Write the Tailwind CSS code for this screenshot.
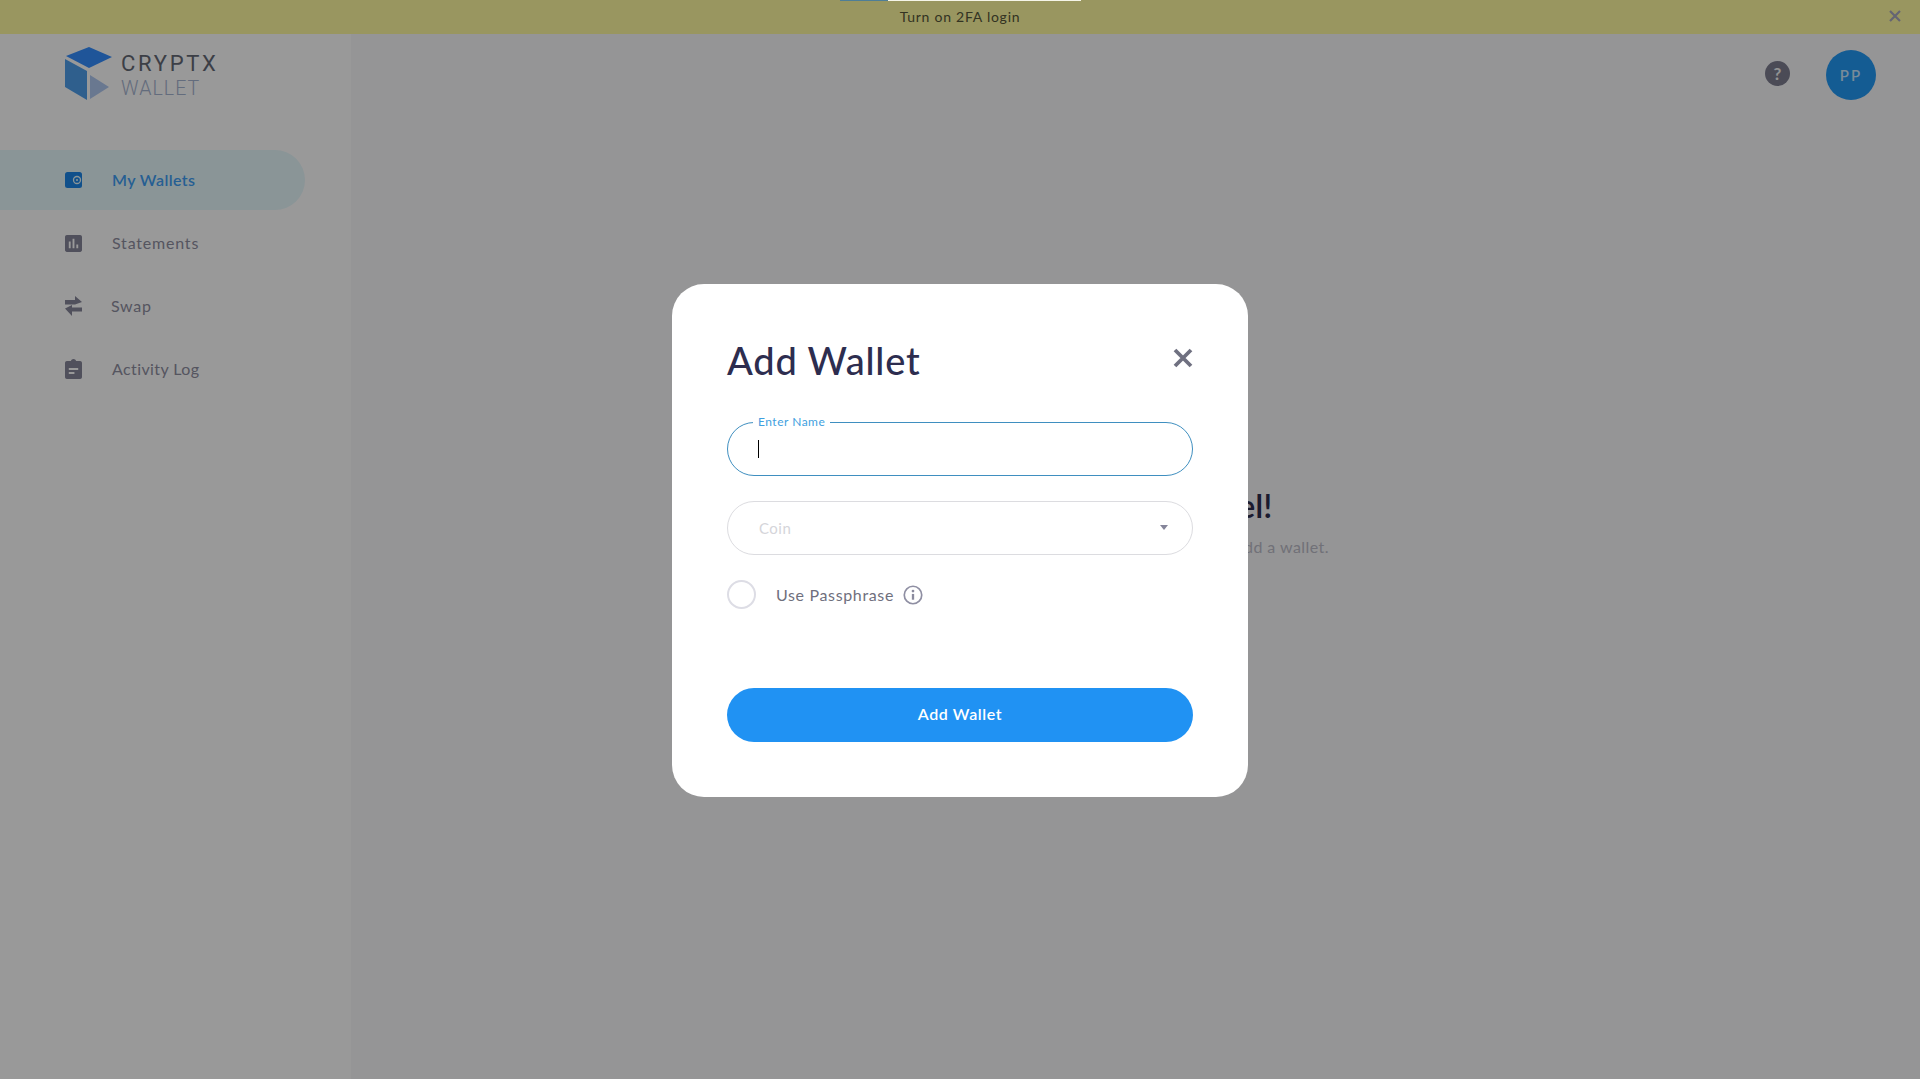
<!DOCTYPE html>
<html lang="en">
<head>
  <meta charset="UTF-8">
  <title>CryptX Wallet</title>
  <script src="https://cdn.jsdelivr.net/npm/@tailwindcss/browser@4"></script>
</head>
<body class="font-['Lato','Noto_Sans',sans-serif]">
  <div class="relative h-[1079px] w-[1920px] overflow-hidden bg-[#f8f8fa]">

    <!-- top banner -->
    <div class="relative flex h-[34px] items-center justify-center bg-[#fffaa0] pb-[1px] text-[14px] tracking-[0.75px] text-[#55553a]">
      <span>Turn on 2FA login</span>
      <svg class="absolute right-[19px] top-[10px] h-3 w-3" viewBox="0 0 12 12" fill="none" stroke="#a8a8c0" stroke-width="2.2"><path d="M1 1l10 10M11 1L1 11"/></svg>
    </div>

    <div class="flex h-[1045px]">
      <!-- sidebar -->
      <aside class="w-[351px] shrink-0 bg-white">
        <div class="flex h-[116px] items-start pl-[65px] pt-[13px]">
          <svg class="h-[53px] w-[47px]" viewBox="0 0 47 53">
            <path d="M1 9L24 0l23 10-23 11z" fill="#348eff"/>
            <path d="M0 12l22 12v29L0 40z" fill="#4f9fec"/>
            <path d="M25 28l19 12-19 12z" fill="#b0c8f0"/>
          </svg>
          <div class="ml-[9px] mt-[6px] font-['Roboto',sans-serif] leading-none">
            <div class="text-[22px] tracking-[2.7px] text-[#646976]">CRYPTX</div>
            <div class="mt-[4px] text-[19.5px] font-light tracking-[1.1px] text-[#a6b4d0]">WALLET</div>
          </div>
        </div>

        <nav class="flex flex-col gap-[3px] text-[16px] tracking-[0.6px] text-[#8e8e9f]">
          <a class="flex h-[60px] w-[305px] items-center rounded-r-full bg-[#e7f8fc] pl-[65px] font-semibold tracking-[0.4px] text-[#3f9ff5]">
            <svg class="h-4 w-[17px] shrink-0" viewBox="0 0 17 16"><rect width="17" height="16" rx="2.500" fill="#1c86e8"/><path d="M17 2.500h-4.500a5.500 5.500 0 0 0 0 11H17z" fill="#1c86e8"/><circle cx="12" cy="8" r="3.500" fill="none" stroke="#e7f8fc" stroke-width="1.300"/><circle cx="12" cy="8" r="1" fill="#e7f8fc"/></svg>
            <span class="ml-[30px]">My Wallets</span>
          </a>
          <a class="flex h-[60px] items-center pl-[65px]">
            <svg class="h-[17px] w-[17px] shrink-0" viewBox="3 3 18 18" fill="#858599"><path d="M19 3H5c-1.100 0-2 .9-2 2v14c0 1.100.9 2 2 2h14c1.100 0 2-.9 2-2V5c0-1.100-.9-2-2-2zM9 17H7v-7h2v7zm4 0h-2V7h2v10zm4 0h-2v-4h2v4z"/></svg>
            <span class="ml-[30px] tracking-[0.8px]">Statements</span>
          </a>
          <a class="flex h-[60px] items-center pl-[65px]">
            <svg class="h-[20px] w-[17px] shrink-0" viewBox="0 0 17 20" fill="#858599"><path d="M0 4h10V0l7 6-7 2.500H0zM17 11.500H7V9L0 12.500 7 20v-4.500h10z"/></svg>
            <span class="ml-[29px] tracking-[0.7px]">Swap</span>
          </a>
          <a class="flex h-[60px] items-center pl-[65px]">
            <svg class="h-[20px] w-[17px] shrink-0" viewBox="3 1 18 20" preserveAspectRatio="none" fill="#858599"><path fill-rule="evenodd" d="M19 3h-4.180C14.400 1.840 13.300 1 12 1c-1.300 0-2.400.84-2.820 2H5c-1.100 0-2 .9-2 2v14c0 1.100.9 2 2 2h14c1.100 0 2-.9 2-2V5c0-1.100-.9-2-2-2zM7 10h10v2H7zm0 4h6v2H7z"/></svg>
            <span class="ml-[30px] tracking-[0.4px]">Activity Log</span>
          </a>
        </nav>
      </aside>

      <!-- main -->
      <main class="relative flex-1 pt-[16px]">
        <div class="flex justify-end gap-[36px] pr-[44px]">
          <div class="mt-[11px] flex h-[25px] w-[25px] items-center justify-center rounded-full bg-[#7d7d90] text-[17px] font-bold text-[#f5f5f5]">?</div>
          <div class="flex h-[50px] w-[50px] items-center justify-center rounded-full bg-[#2299f5] text-[15px] font-semibold tracking-[2px] text-[#c8e8ff]">PP</div>
        </div>
        <div class="mt-[383px] text-center">
          <h2 class="text-[33px] font-semibold leading-[44px] text-[#2d2d4f]">Welcome to Panel!</h2>
          <p class="mt-[8px] text-[16px] leading-6 tracking-[0.45px] text-[#bcbcc8]">You have no wallets yet. Click below to add a wallet.</p>
        </div>
      </main>
    </div>

    <!-- overlay -->
    <div class="absolute inset-0 flex items-center justify-center bg-black/40 pt-[2px]">
      <div class="w-[576px] rounded-[32px] bg-white px-[55px] pb-[55px] pt-[51px]">
        <div class="flex h-[50px] items-center justify-between">
          <h1 class="text-[38px] font-medium tracking-[0.8px] text-[#2d2d4f]">Add Wallet</h1>
          <svg class="mb-[4px] mr-[0px] h-[20px] w-[20px]" viewBox="0 0 20 20" fill="none" stroke="#6f7080" stroke-width="3.800"><path d="M2 2l16 16M18 2L2 18"/></svg>
        </div>

        <div class="relative mt-[37px] flex h-[54px] items-center rounded-full border border-[#3f8fc0] pl-[30px]">
          <label class="absolute left-[25px] top-[-8px] bg-white px-[5px] text-[12px] leading-[14px] tracking-[0.5px] text-[#3f9fe0]">Enter Name</label>
          <span class="h-[18px] w-px bg-black"></span>
        </div>

        <div class="mt-[25px] flex h-[54px] items-center justify-between rounded-full border border-[#dcdce0] pl-[31px] pr-[24px] text-[15px] tracking-[0.5px] text-[#d5d5da]">
          <span>Coin</span>
          <span class="mb-[2px] h-0 w-0 border-x-[4.500px] border-t-[5px] border-x-transparent border-t-[#85859a]"></span>
        </div>

        <div class="mt-[25px] flex h-[29px] items-center">
          <span class="h-[29px] w-[29px] rounded-full border-2 border-[#dddde5]"></span>
          <span class="ml-[20px] text-[16px] tracking-[0.65px] text-[#6f6f7d]">Use Passphrase</span>
          <svg class="ml-[9px] h-[20px] w-[20px]" viewBox="0 0 19 19" fill="none"><circle cx="9.500" cy="9.500" r="8.300" stroke="#8f8fa3" stroke-width="1.600"/><circle cx="9.500" cy="5.800" r="1.300" fill="#8b8b9e"/><path d="M9.500 8.500v5.500" stroke="#8b8b9e" stroke-width="2.200"/></svg>
        </div>

        <button class="mt-[79px] h-[54px] w-full rounded-full bg-[#2092f3] pb-[2px] text-[16px] font-semibold tracking-[0.6px] text-white">Add Wallet</button>
      </div>
    </div>

    <!-- strip that sits above the overlay at the very top -->
    <div class="absolute left-[840px] top-0 flex h-px w-[241px]">
      <span class="w-[48px] bg-[#4e7e96]"></span>
      <span class="flex-1 bg-[#f5f5e8]"></span>
    </div>

  </div>
</body>
</html>
